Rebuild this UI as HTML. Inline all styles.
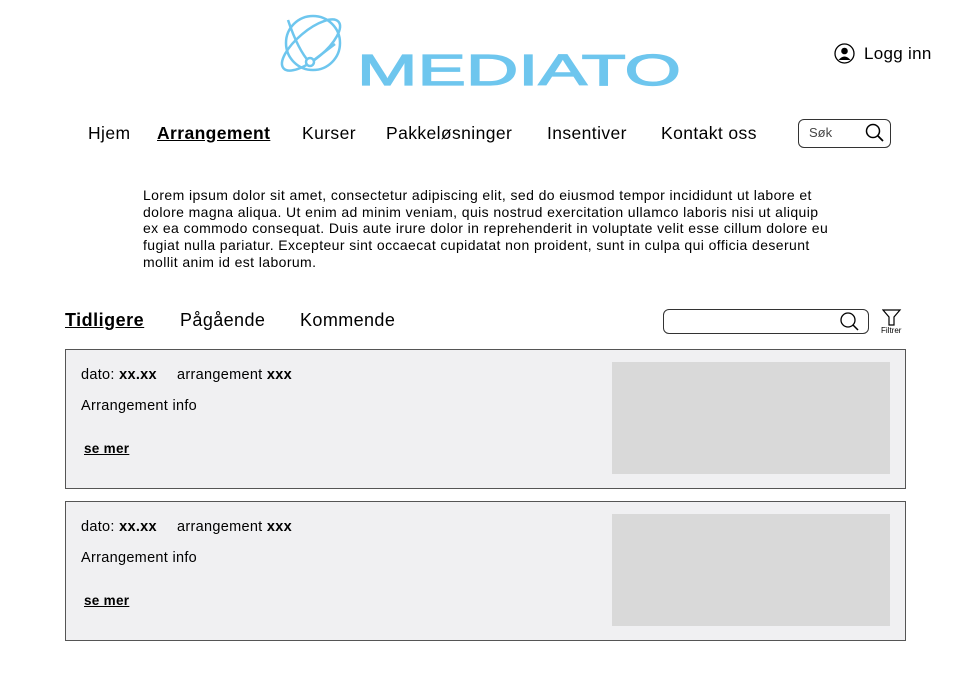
<!DOCTYPE html>
<html><head><meta charset="utf-8"><style>
body{margin:0;width:979px;height:691px;background:#fff;font-family:"Liberation Sans",sans-serif;color:#000;position:relative;overflow:hidden}
.a{position:absolute;white-space:nowrap}
.nav{font-size:17.5px;top:123px;letter-spacing:.4px}
.card{position:absolute;left:65px;width:839px;height:138px;border:1px solid #555;background:#f0f0f2}
.card .img{position:absolute;left:546px;top:12px;width:278px;height:112px;background:#d9d9d9}
.card .t{position:absolute;font-size:14.5px;letter-spacing:.3px}
</style></head><body>
<svg class="a" style="left:276px;top:10px" width="420" height="85" viewBox="0 0 420 85">
 <g fill="none" stroke="#6ec6ee" stroke-width="2.5">
  <circle cx="37" cy="33" r="27"/>
  <ellipse cx="35" cy="35" rx="36" ry="14" transform="rotate(-40 35 35)"/>
  <path d="M12 10 Q22 40 34 53 L59 34"/>
  <circle cx="34" cy="52" r="4" fill="#fff"/>
 </g>
 <text x="81" y="75" font-size="44" fill="#6ec6ee" stroke="#6ec6ee" stroke-width="1.2" textLength="324" lengthAdjust="spacingAndGlyphs" font-family="Liberation Sans">MEDIATO</text>
</svg>
<svg class="a" style="left:834px;top:43px" width="21" height="21" viewBox="0 0 21 21"><circle cx="10.5" cy="10.5" r="9.5" fill="none" stroke="#000" stroke-width="1.3"/><circle cx="10.5" cy="8" r="3.3"/><path d="M4.5 17 Q10.5 10 16.5 17Z"/></svg>
<div class="a" style="left:864px;top:44px;font-size:17px;letter-spacing:.3px">Logg inn</div>
<div class="a nav" style="left:88px">Hjem</div>
<div class="a nav" style="left:157px;font-weight:bold;text-decoration:underline">Arrangement</div>
<div class="a nav" style="left:302px">Kurser</div>
<div class="a nav" style="left:386px">Pakkeløsninger</div>
<div class="a nav" style="left:547px">Insentiver</div>
<div class="a nav" style="left:661px">Kontakt oss</div>
<div class="a" style="left:798px;top:119px;width:91px;height:27px;border:1px solid #333;border-radius:6px"></div>
<div class="a" style="left:809px;top:125px;font-size:13px;color:#444">Søk</div>
<svg class="a" style="left:865px;top:123px" width="20" height="20"><circle cx="8" cy="8" r="6.5" fill="none" stroke="#000" stroke-width="1.5"/><path d="M13 13L18 18" stroke="#000" stroke-width="1.8"/></svg>
<div class="a" style="left:143px;top:187px;font-size:14px;letter-spacing:.4px;line-height:16.7px;white-space:normal;width:690px">Lorem ipsum dolor sit amet, consectetur adipiscing elit, sed do eiusmod tempor incididunt ut labore et dolore magna aliqua. Ut enim ad minim veniam, quis nostrud exercitation ullamco laboris nisi ut aliquip ex ea commodo consequat. Duis aute irure dolor in reprehenderit in voluptate velit esse cillum dolore eu fugiat nulla pariatur. Excepteur sint occaecat cupidatat non proident, sunt in culpa qui officia deserunt mollit anim id est laborum.</div>
<div class="a" style="left:65px;top:310px;font-size:18px;letter-spacing:.5px;font-weight:bold;text-decoration:underline">Tidligere</div>
<div class="a" style="left:180px;top:310px;font-size:18px;letter-spacing:.4px">Pågående</div>
<div class="a" style="left:300px;top:310px;font-size:18px;letter-spacing:.4px">Kommende</div>
<div class="a" style="left:663px;top:309px;width:204px;height:23px;border:1px solid #333;border-radius:6px"></div>
<svg class="a" style="left:839px;top:311px" width="22" height="22"><circle cx="9" cy="9" r="7" fill="none" stroke="#000" stroke-width="1.3"/><path d="M14 14L19 19" stroke="#000" stroke-width="1.5"/></svg>
<svg class="a" style="left:882px;top:309px" width="20" height="18"><path d="M1 1H18L12 8V16H7V8Z" fill="none" stroke="#000" stroke-width="1.2"/></svg>
<div class="a" style="left:881px;top:326px;font-size:8px">Filtrer</div>
<div class="card" style="top:349px"><div class="img"></div>
<div class="t" style="left:15px;top:17px">dato: <b>xx.xx</b></div><div class="t" style="left:111px;top:17px">arrangement <b>xxx</b></div>
<div class="t" style="left:15px;top:48px">Arrangement info</div>
<div class="t" style="left:18px;top:91px;font-size:13.5px;font-weight:bold;text-decoration:underline">se mer</div></div>
<div class="card" style="top:501px"><div class="img"></div>
<div class="t" style="left:15px;top:17px">dato: <b>xx.xx</b></div><div class="t" style="left:111px;top:17px">arrangement <b>xxx</b></div>
<div class="t" style="left:15px;top:48px">Arrangement info</div>
<div class="t" style="left:18px;top:91px;font-size:13.5px;font-weight:bold;text-decoration:underline">se mer</div></div>
</body></html>
